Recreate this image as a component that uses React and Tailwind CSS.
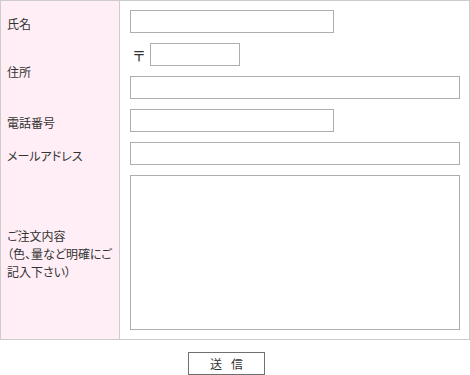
export default function App() {
  const font = "font-['MS_PGothic','Noto_Sans_CJK_JP',sans-serif] text-[12px] leading-[18px] text-[#333] [font-feature-settings:'palt']";
  const label = 'bg-[#ffeef5] border-r border-[#cccccc] pl-[6px] flex items-center';
  const input = 'block h-[23px] border border-[#abadb3] bg-white';

  return (
    <div className={`w-[470px] h-[375px] bg-white ${font}`}>
      <div className="w-[470px] border border-[#cccccc] grid grid-cols-[119px_1fr]">
        {/* 氏名 */}
        <div className={`${label} pt-[9px] pb-[5px]`}>
          <span className="relative top-[2px]">氏名</span>
        </div>
        <div className="pl-[10px] pt-[9px] pb-[5px]">
          <input className={`${input} w-[204px]`} />
        </div>

        {/* 住所 */}
        <div className={`${label} py-[5px]`}>
          <span className="relative top-[1px]">住所</span>
        </div>
        <div className="pl-[10px] py-[5px] flex flex-col gap-[10px]">
          <div className="flex items-center">
            <span className="w-[20px] pl-[3px] text-[14px]">〒</span>
            <input className={`${input} w-[90px]`} />
          </div>
          <input className={`${input} w-[330px]`} />
        </div>

        {/* 電話番号 */}
        <div className={`${label} py-[5px]`}>
          <span className="relative top-[2px]">電話番号</span>
        </div>
        <div className="pl-[10px] py-[5px]">
          <input className={`${input} w-[204px]`} />
        </div>

        {/* メールアドレス */}
        <div className={`${label} py-[5px]`}>
          <span className="relative top-[2px]">メールアドレス</span>
        </div>
        <div className="pl-[10px] py-[5px]">
          <input className={`${input} w-[330px]`} />
        </div>

        {/* ご注文内容 */}
        <div className={`${label} pt-[5px] pb-[9px]`}>
          <span className="whitespace-nowrap relative top-[1px]">
            ご注文内容<br />（色、量など明確にご<br />記入下さい）
          </span>
        </div>
        <div className="pl-[10px] pt-[5px] pb-[9px]">
          <textarea className="block w-[330px] h-[155px] border border-[#abadb3] bg-white resize-none" />
        </div>
      </div>

      <div className="pt-[12px] pl-[188px]">
        <button className="w-[77px] h-[23px] border border-[#707070] bg-white flex items-center justify-center gap-[9px]">
          <span>送</span>
          <span>信</span>
        </button>
      </div>
    </div>
  );
}
